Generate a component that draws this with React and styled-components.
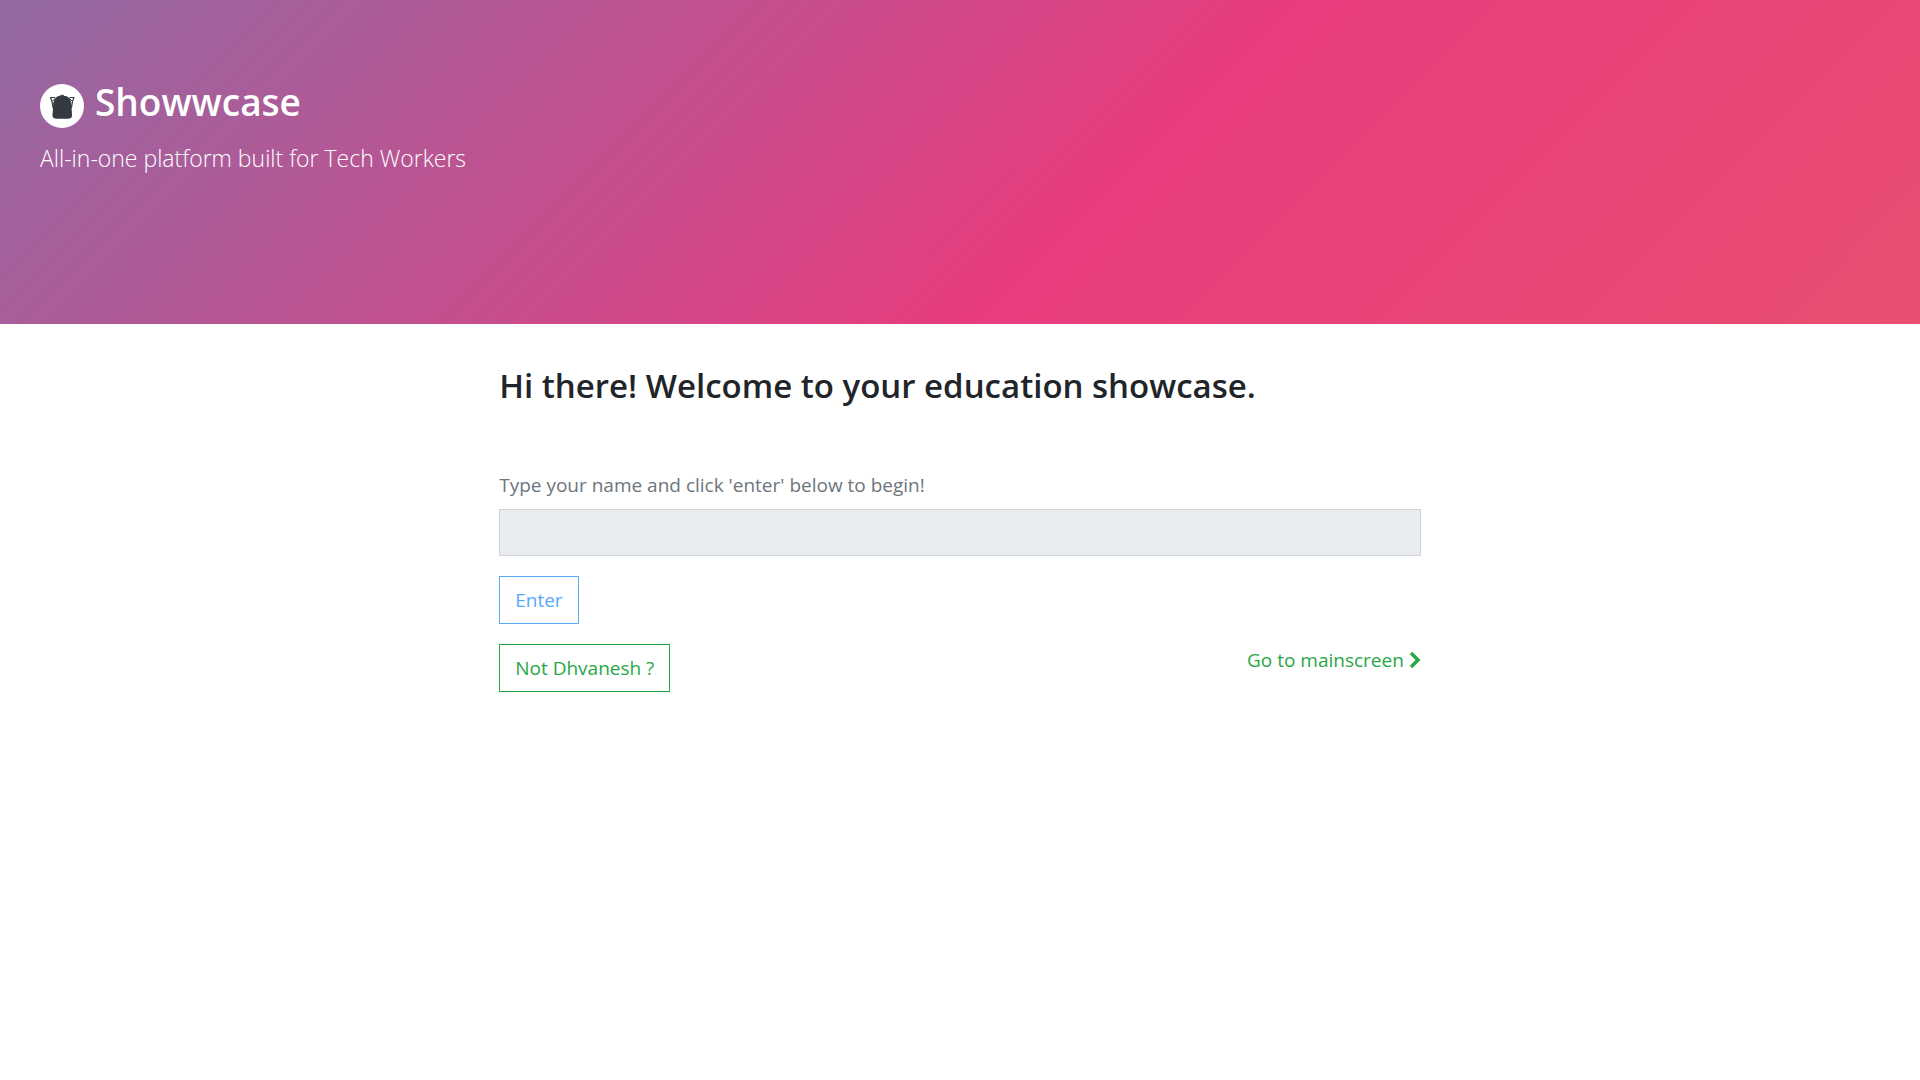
import React from "react";
import styled, { createGlobalStyle } from "styled-components";

const GlobalStyle = createGlobalStyle`
  *, *::before, *::after { box-sizing: border-box; }
  body {
    margin: 0;
    background: #fff;
    color: #212529;
    font-family: "Open Sans", "Noto Sans", sans-serif;
    font-size: 19px;
    line-height: 30px;
  }
`;

const Hero = styled.header`
  padding: 72px 40px 150px;
  color: #fff;
  background: linear-gradient(-45deg, #ee7752, #e73c7e, #23a6d5, #23d5ab);
  background-size: 400% 400%;
  background-position: 73% 50%;
`;

const Brand = styled.h1`
  display: flex;
  align-items: center;
  gap: 11px;
  margin: 0 0 10px;
  font-size: 37px;
  font-weight: 600;
  line-height: 60px;
`;

const Logo = styled.svg`
  width: 44px;
  height: 44px;
  margin-top: 8px;
`;

const Tagline = styled.p`
  margin: 0;
  font-size: 23px;
  font-weight: 300;
  line-height: 32px;
`;

const Content = styled.main`
  width: 48%;
  margin: 0 auto;
  padding-top: 40px;
`;

const Welcome = styled.h2`
  margin: 0 0 60px;
  font-size: 33px;
  font-weight: 600;
  line-height: 44px;
`;

const Form = styled.form`
  display: flex;
  flex-direction: column;
  align-items: flex-start;
  gap: 20px;
`;

const Field = styled.div`
  display: flex;
  flex-direction: column;
  gap: 8px;
  width: 100%;
`;

const Label = styled.label`
  padding-top: 1px;
  color: #6c757d;
  line-height: 32px;
`;

const NameInput = styled.input`
  width: 100%;
  height: 47px;
  padding: 8px 15px;
  border: 1px solid #ced4da;
  border-radius: 0;
  background: #e9ecef;
  color: #495057;
  font: inherit;
`;

const OutlineButton = styled.button`
  padding: 8px 15px;
  border: 1px solid ${(p) => p.$color};
  border-radius: 0;
  background: transparent;
  color: ${(p) => p.$color};
  font: inherit;
  cursor: pointer;
`;

const Actions = styled.div`
  display: flex;
  justify-content: space-between;
  align-items: flex-start;
  width: 100%;
`;

const MainLink = styled.a`
  display: flex;
  align-items: center;
  gap: 5px;
  color: #28a745;
  line-height: 32px;
  text-decoration: none;
`;

const Chevron = styled.svg`
  width: 12px;
  height: 18px;
`;

function BackpackLogo() {
  return (
    <Logo viewBox="0 0 44 44" aria-hidden="true">
      <circle cx="22" cy="22" r="22" fill="#fff" />
      <g fill="none" stroke="#343a40" strokeLinecap="round" strokeLinejoin="round">
        <path d="M19.500 12.500q0-1.300 2.500-1.300t2.500 1.300" strokeWidth="1" />
        <path d="M14.500 13.500l-4 0 1.500 4 1 6M30 13.500l4 0-1.500 4-1 6" strokeWidth="1.200" />
        <path d="M12.500 17l2.500-2.500M32 17l-2.500-2.500" strokeWidth="1" />
      </g>
      <path
        fill="#343a40"
        d="M19 12h6.500C29 12.500 31 16 31.300 20L32 30.500C32.200 34 30.500 34.700 27 34.700H17.500C14 34.700 12.300 34 12.500 30.500L13.200 20C13.500 16 15.500 12.500 19 12z"
      />
    </Logo>
  );
}

export default function App() {
  return (
    <>
      <GlobalStyle />
      <Hero>
        <Brand>
          <BackpackLogo />
          <span>Showwcase</span>
        </Brand>
        <Tagline>All-in-one platform built for Tech Workers</Tagline>
      </Hero>
      <Content>
        <Welcome>Hi there! Welcome to your education showcase.</Welcome>
        <Form onSubmit={(e) => e.preventDefault()}>
          <Field>
            <Label htmlFor="name">Type your name and click 'enter' below to begin!</Label>
            <NameInput id="name" type="text" disabled />
          </Field>
          <OutlineButton type="submit" $color="#59a9fb">Enter</OutlineButton>
          <Actions>
            <OutlineButton type="button" $color="#28a745">Not Dhvanesh ?</OutlineButton>
            <MainLink href="#main">
              Go to mainscreen
              <Chevron viewBox="0 0 12 18" aria-hidden="true">
                <path d="M2 2l7 7-7 7" fill="none" stroke="currentColor" strokeWidth="3.500" />
              </Chevron>
            </MainLink>
          </Actions>
        </Form>
      </Content>
    </>
  );
}
